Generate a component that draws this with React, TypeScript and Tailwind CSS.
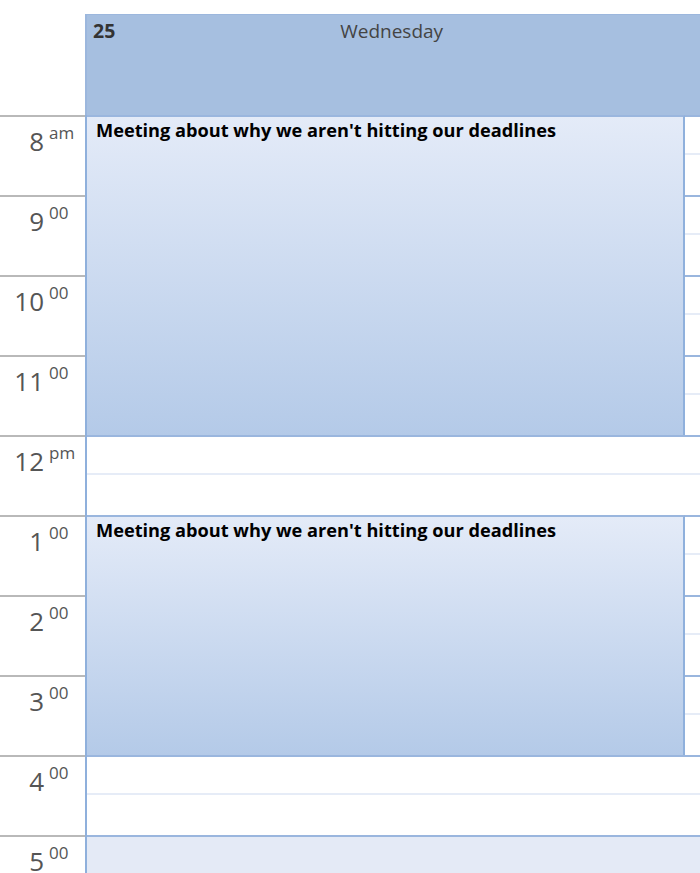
import React from "react";

const font = { fontFamily: '"Open Sans", "Noto Sans", sans-serif' };

function TimeCell({ n, s }: { n: string; s: string }) {
  return (
    <div className="h-[80px] border-t-2 border-[#b9b9b9] flex items-start text-[#555]">
      <div className="w-[44px] text-right text-[26px] leading-none mt-[11px]">{n}</div>
      <div className="ml-[5px] text-[17px] leading-none mt-[7px]">{s}</div>
    </div>
  );
}

function Slot() {
  return (
    <div className="h-[80px] border-t-2 border-[#9ab6de] flex flex-col">
      <div className="h-[38px] border-b-2 border-[#e6ecf7]" />
      <div className="flex-1" />
    </div>
  );
}

function Event({ hours }: { hours: number }) {
  return (
    <div className="flex" style={{ height: hours * 80 }}>
      <div className="flex-1 border-t-2 border-[#9ab6de] border-r-2 border-r-[#8fb0dc] bg-gradient-to-b from-[#e4ebf8] to-[#b4cae8] pl-[9px] pt-[1px]">
        <div className="text-[18.2px] font-bold text-black leading-[24px] whitespace-nowrap">
          Meeting about why we aren't hitting our deadlines
        </div>
      </div>
      <div className="w-[15px] flex flex-col">
        {Array.from({ length: hours }).map((_, i) => (
          <div key={i} className="h-[80px] border-t-2 border-[#9ab6de] flex flex-col">
            <div className="h-[38px] border-b-2 border-[#e6ecf7]" />
          </div>
        ))}
      </div>
    </div>
  );
}

export default function App() {
  const times: [string, string][] = [
    ["8", "am"],
    ["9", "00"],
    ["10", "00"],
    ["11", "00"],
    ["12", "pm"],
    ["1", "00"],
    ["2", "00"],
    ["3", "00"],
    ["4", "00"],
    ["5", "00"],
  ];
  return (
    <div className="w-[700px] h-[873px] overflow-hidden bg-white" style={font}>
      <div className="h-[14px]" />
      <div className="flex">
        <div className="w-[85px] shrink-0" />
        <div className="flex-1 h-[101px] bg-[#a6bfe0] border-t border-l-2 border-[#9cb7dd] px-[6px] pt-[4px]">
          <div className="flex">
            <div className="text-[19.5px] font-bold text-[#333] leading-[24px]">25</div>
            <div className="flex-1 text-center text-[19px] text-[#444] leading-[24px] pr-[26px]">Wednesday</div>
          </div>
        </div>
      </div>
      <div className="flex">
        <div className="w-[85px] shrink-0 flex flex-col">
          {times.map(([n, s]) => (
            <TimeCell key={n} n={n} s={s} />
          ))}
        </div>
        <div className="flex-1 border-l-2 border-[#8fb0dc] flex flex-col">
          <Event hours={4} />
          <Slot />
          <Event hours={3} />
          <Slot />
          <div className="h-[80px] border-t-2 border-[#9ab6de] bg-[#e4eaf6]" />
        </div>
      </div>
    </div>
  );
}
